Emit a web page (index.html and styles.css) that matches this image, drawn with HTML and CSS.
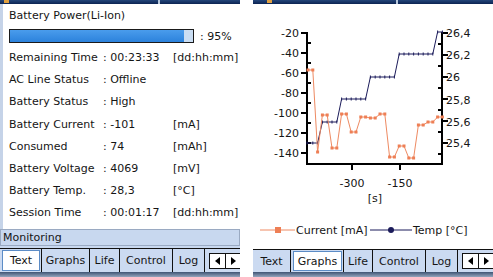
FILE: index.html
```html
<!DOCTYPE html>
<html>
<head>
<meta charset="utf-8">
<link rel="stylesheet" href="styles.css">
</head>
<body>
<div class="screen">
  <section class="panel">
    <div class="titlebar"><span class="tb-icon"></span><span class="tb-mark tb-mark-left"></span></div>
    <div class="content">
      <div class="title">Battery Power(Li-Ion)</div>
      <div class="progress-row">
        <div class="progress"><div class="fill" style="width:95%"></div></div>
        <span class="pct">: 95%</span>
      </div>
      <div class="rows">
        <div class="row"><span>Remaining Time</span><span>: 00:23:33</span><span>[dd:hh:mm]</span></div>
        <div class="row"><span>AC Line Status</span><span>: Offline</span><span></span></div>
        <div class="row"><span>Battery Status</span><span>: High</span><span></span></div>
        <div class="row"><span>Battery Current</span><span>: -101</span><span>[mA]</span></div>
        <div class="row"><span>Consumed</span><span>: 74</span><span>[mAh]</span></div>
        <div class="row"><span>Battery Voltage</span><span>: 4069</span><span>[mV]</span></div>
        <div class="row"><span>Battery Temp.</span><span>: 28,3</span><span>[°C]</span></div>
        <div class="row"><span>Session Time</span><span>: 00:01:17</span><span>[dd:hh:mm]</span></div>
      </div>
    </div>
    <div class="monitor">Monitoring</div>
    <div class="tabarea">
      <div class="tabbar">
        <div class="tab t-text sel">Text</div>
        <div class="tab t-graphs">Graphs</div>
        <div class="tab t-life">Life</div>
        <div class="tab t-control">Control</div>
        <div class="tab t-log">Log</div>
        <div class="arrows"><span class="arr"><i class="tri-l"></i></span><span class="arr"><i class="tri-r"></i></span></div>
      </div>
    </div>
    <div class="bottom"></div>
  </section>

  <section class="panel">
    <div class="titlebar"><span class="tb-icon tb-icon-right"></span><span class="tb-mark tb-mark-right"></span></div>
    <div class="chart">
      <svg width="240" height="245" viewBox="253 4 240 245" xmlns="http://www.w3.org/2000/svg">
        <defs>
          <marker id="sq" markerUnits="userSpaceOnUse" markerWidth="4" markerHeight="4" refX="2" refY="2">
            <rect x="0.5" y="0.5" width="3" height="3" fill="#ee7f55"/>
          </marker>
          <marker id="pl" markerUnits="userSpaceOnUse" markerWidth="4" markerHeight="4" refX="2" refY="2">
            <rect x="1.5" y="0.5" width="1" height="3" fill="#1b1b5a"/>
          </marker>
        </defs>
        <g stroke="#000" stroke-width="2" fill="none">
          <line x1="307" y1="32" x2="307" y2="165"/>
          <line x1="306" y1="164" x2="443" y2="164"/>
          <line x1="442" y1="32" x2="442" y2="165"/>
          <path d="M301 33H307M301 53H307M301 73H307M301 93H307M301 113H307M301 133H307M301 153H307"/>
          <path d="M307 43H311M307 63H311M307 83H311M307 103H311M307 123H311M307 143H311"/>
          <path d="M442 33H448M442 55H448M442 77H448M442 99H448M442 121H448M442 143H448"/>
          <path d="M438 44H442M438 66H442M438 88H442M438 110H442M438 132H442M438 154H442"/>
          <path d="M352 164V170M400 164V170"/>
        </g>
        <polyline fill="none" stroke="#1b1b5a" stroke-width="1" marker-start="url(#pl)" marker-mid="url(#pl)" marker-end="url(#pl)"
          points="307,143 312.8,143 317.6,143 322.4,122 327.2,122 332,122 336.8,122 341.6,99 346.4,99 351.2,99 356,99 360.8,99 365.6,99 370.4,77 375.2,77 380,77 384.8,77 389.6,77 394.4,77 399.2,54 404,54 408.8,54 413.6,54 418.4,54 423.2,54 428,54 432.8,54 437.6,32 442.4,32"/>
        <polyline fill="none" stroke="#ee8a62" stroke-width="1" marker-start="url(#sq)" marker-mid="url(#sq)" marker-end="url(#sq)"
          points="308,70 312.8,70 317.6,152 322.4,115 327.2,115 332,148 336.8,148 341.6,114 346.4,114 351.2,132 356,132 360.8,117 365.6,117 370.4,118 375.2,118 380,114 384.8,114 389.6,157 394.4,157 399.2,146 404,146 408.8,158 413.6,158 418.4,125 423.2,125 428,122 432.8,122 437.6,117 442.4,117"/>
        <g class="lbl" text-anchor="end">
          <text x="299" y="37">-20</text>
          <text x="299" y="57">-40</text>
          <text x="299" y="77">-60</text>
          <text x="299" y="97">-80</text>
          <text x="299" y="117">-100</text>
          <text x="299" y="137">-120</text>
          <text x="299" y="157">-140</text>
        </g>
        <g class="lbl" text-anchor="start">
          <text x="446" y="37">26,4</text>
          <text x="446" y="59">26,2</text>
          <text x="446" y="81">26</text>
          <text x="446" y="104">25,8</text>
          <text x="446" y="126">25,6</text>
          <text x="446" y="147">25,4</text>
        </g>
        <g class="lbl" text-anchor="middle">
          <text x="352" y="187">-300</text>
          <text x="400" y="187">-150</text>
          <text x="375" y="202">[s]</text>
        </g>
        <line x1="260" y1="230" x2="295" y2="230" stroke="#ee8a62" stroke-width="1"/>
        <rect x="275" y="227" width="6" height="6" fill="#ee7f55"/>
        <text class="lbl" x="296" y="234">Current [mA]</text>
        <line x1="370" y1="230" x2="412" y2="230" stroke="#1b1b5a" stroke-width="1"/>
        <circle cx="391" cy="230" r="3" fill="#1b1b5a"/>
        <text class="lbl" x="413" y="234">Temp [°C]</text>
      </svg>
    </div>
    <div class="tabbar">
      <div class="tab t-text">Text</div>
      <div class="tab t-graphs sel">Graphs</div>
      <div class="tab t-life">Life</div>
      <div class="tab t-control">Control</div>
      <div class="tab t-log">Log</div>
      <div class="arrows"><span class="arr"><i class="tri-l"></i></span><span class="arr"><i class="tri-r"></i></span></div>
    </div>
    <div class="bottom"></div>
  </section>
</div>
</body>
</html>
```

FILE: styles.css
```css
html, body {
  margin: 0;
  padding: 0;
}
body {
  width: 493px;
  height: 277px;
  overflow: hidden;
  background: #fff;
  font-family: "DejaVu Sans", "Liberation Sans", sans-serif;
  font-size: 11px;
  color: #151515;
}
.screen {
  display: flex;
  gap: 13px;
  height: 277px;
}
.panel {
  width: 240px;
  height: 277px;
  display: flex;
  flex-direction: column;
  overflow: hidden;
  flex: none;
}
.titlebar {
  height: 4px;
  flex: none;
  background: linear-gradient(#24467a, #0b2352);
  position: relative;
}
.tb-icon {
  position: absolute;
  left: 4px;
  top: 0;
  width: 5px;
  height: 3px;
  background: #e0a040;
}
.tb-icon-right {
  left: 14px;
}
.tb-mark {
  position: absolute;
  top: 0;
  width: 2px;
  height: 4px;
  background: #b8c8dc;
}
.tb-mark-left { left: 158px; }
.tb-mark-right { left: 143px; }

.content {
  flex: 1;
  border-left: 3px solid #c5d3e8;
  padding: 1px 0 0 6px;
}
.title {
  line-height: 22px;
  height: 22px;
  white-space: nowrap;
}
.progress-row {
  display: flex;
  align-items: center;
  margin-top: 2px;
  height: 14px;
}
.progress {
  width: 183px;
  height: 12px;
  border: 1px solid #1a1a1a;
  background: #c9ddf3;
  flex: none;
}
.fill {
  height: 100%;
  background: linear-gradient(#4a9cec, #2c82dc);
}
.pct {
  margin-left: 6px;
}
.rows {
  margin-top: 4px;
}
.row {
  display: grid;
  grid-template-columns: 94px 70px auto;
  line-height: 22.2px;
  height: 22.2px;
  white-space: nowrap;
}

.monitor {
  height: 15px;
  line-height: 15px;
  flex: none;
  background: #c8d8ef;
  border: 1px solid #9aaac2;
  padding-left: 2px;
}
.tabarea {
  flex: none;
  padding-top: 2px;
  background: #c8d8ef;
}
.tabbar {
  flex: none;
  display: flex;
  align-items: stretch;
  height: 22px;
  border-top: 1px solid #111;
  background: #cbdaf1;
}
.tabarea .tabbar {
  height: 23px;
}
.tab {
  flex: none;
  border-right: 1px solid #111;
  display: flex;
  align-items: center;
  justify-content: center;
  box-sizing: border-box;
  white-space: nowrap;
}
.t-text { width: 38px; }
.t-graphs { width: 49px; }
.t-life { width: 30px; }
.t-control { width: 53px; }
.t-log { width: 32px; }
.tab.sel {
  background: #fff;
  border: 1px solid #5c8cc6;
  margin: 1px 1px 1px 2px;
}
.tab.sel + .tab {
  border-left: 1px solid #111;
}
.arrows {
  display: flex;
  margin-left: 4px;
  align-self: center;
  height: 16px;
}
.arr {
  width: 15px;
  height: 14px;
  border: 1px solid #111;
  background: #fff;
  display: flex;
  align-items: center;
  justify-content: center;
}
.arr + .arr {
  border-left: none;
}
.tri-l, .tri-r {
  display: block;
  width: 0;
  height: 0;
  border-top: 4px solid transparent;
  border-bottom: 4px solid transparent;
}
.tri-l { border-right: 5px solid #000; }
.tri-r { border-left: 5px solid #000; }

.bottom {
  height: 5px;
  flex: none;
  background: linear-gradient(#3f5474, #93a4bd);
}
.chart {
  height: 245px;
  flex: none;
}
.chart svg {
  display: block;
}
.lbl {
  font-family: "DejaVu Sans", "Liberation Sans", sans-serif;
  font-size: 11px;
  fill: #151515;
}
```
